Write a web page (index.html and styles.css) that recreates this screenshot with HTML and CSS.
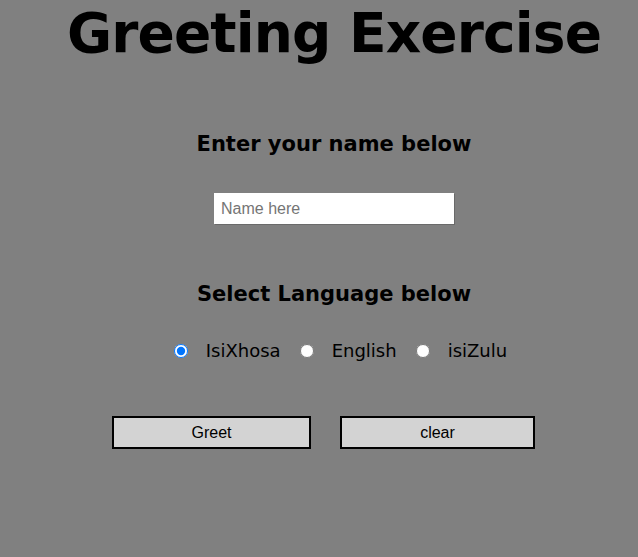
FILE: index.html
```html
<!DOCTYPE html>
<html>
<head>
<meta charset="utf-8">
<link rel="stylesheet" href="styles.css">
</head>
<body>
<div class="page">
  <h1 class="title">Greeting Exercise</h1>
  <h3 class="heading heading-name">Enter your name below</h3>
  <input class="name-input" type="text" placeholder="Name here">
  <h3 class="heading heading-lang">Select Language below</h3>
  <div class="radios">
    <label class="radio-item"><input type="radio" name="lang" checked><span>IsiXhosa</span></label>
    <label class="radio-item"><input type="radio" name="lang"><span>English</span></label>
    <label class="radio-item"><input type="radio" name="lang"><span>isiZulu</span></label>
  </div>
  <div class="buttons">
    <button class="btn btn-greet">Greet</button>
    <button class="btn btn-clear">clear</button>
  </div>
</div>
</body>
</html>
```

FILE: styles.css
```css
html, body {
  margin: 0;
  padding: 0;
  background: #808080;
  height: 100%;
}
body {
  font-family: "DejaVu Sans", Verdana, sans-serif;
  color: #000;
}
.page {
  display: flex;
  flex-direction: column;
  align-items: center;
  padding-left: 30px;
}
.title {
  margin: 0;
  font-size: 55px;
  font-weight: bold;
  line-height: 66px;
  letter-spacing: -0.85px;
}
.heading {
  margin: 0;
  font-size: 21px;
  font-weight: bold;
  line-height: 24px;
}
.heading-name {
  margin-top: 66px;
}
.name-input {
  margin-top: 37px;
  width: 240px;
  height: 31px;
  box-sizing: border-box;
  border: none;
  box-shadow: 1px 1px 0 #6a6a6a;
  padding: 0 7px;
  font-family: "Liberation Sans", Arial, sans-serif;
  font-size: 16px;
  outline: none;
}
.name-input::placeholder {
  color: #757575;
}
.heading-lang {
  margin-top: 58px;
}
.radios {
  margin-top: 34px;
  display: flex;
  align-items: center;
  padding-left: 32px;
}
.radio-item {
  display: flex;
  align-items: center;
  font-size: 18px;
}
.radio-item input {
  margin: 0 18px 0 0;
  width: 14px;
  height: 14px;
  accent-color: #0075ff;
}
.radio-item span {
  margin-right: 19px;
}
.buttons {
  margin-top: 55px;
  display: flex;
  gap: 29px;
  margin-left: -21px;
}
.btn {
  height: 33px;
  border: 2px solid #000;
  background: #d3d3d3;
  font-family: "Liberation Sans", Arial, sans-serif;
  font-size: 16px;
  color: #000;
  padding: 0;
}
.btn-greet { width: 199px; }
.btn-clear { width: 195px; }
```
